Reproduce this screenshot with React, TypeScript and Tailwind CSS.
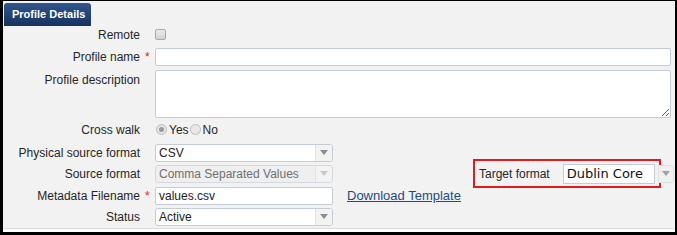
const font = 'font-["Liberation_Sans",Arial,sans-serif]'

function Label({ text, required, top }: { text: string; required?: boolean; top?: boolean }) {
  return (
    <>
      <div className={`w-[137px] shrink-0 text-right text-[12px] leading-[14px] text-[#262626] ${top ? 'pt-[3px]' : ''}`}>
        {text}
      </div>
      <div className={`w-[15px] shrink-0 pl-[5px] text-[12px] leading-[14px] text-[#e02020] ${top ? 'pt-[3px]' : ''}`}>
        {required ? '*' : ''}
      </div>
    </>
  )
}

function Select({ value, disabled }: { value: string; disabled?: boolean }) {
  return (
    <div
      className={`flex h-[18px] w-[178px] items-stretch rounded-[3px] border ${
        disabled ? 'border-[#d3d9e0] bg-[#efefef]' : 'border-[#c3ccd6] bg-white'
      }`}
    >
      <div className={`flex-1 pl-[3px] text-[12px] leading-[16px] ${disabled ? 'text-[#6f6f6f]' : 'text-[#222]'}`}>
        {value}
      </div>
      <div className="flex w-[17px] items-center justify-center rounded-r-[2px] border-l border-[#e2e2e2] bg-[#f3f3f3]">
        <svg width="8" height="5" viewBox="0 0 8 5">
          <path d="M0 0 L8 0 L4 5 Z" fill={disabled ? '#c8c8c8' : '#8c8c8c'} />
        </svg>
      </div>
    </div>
  )
}

export default function App() {
  return (
    <div className={`${font} box-border h-[235px] w-[677px] border-t border-r-2 border-b-[3px] border-l-[3px] border-black bg-white`}>
      <div className="h-[228px] border-b border-[#dcdcdc] bg-[#f2f2f2]">
        <div className="ml-[1px] mt-[1px] inline-flex h-[23px] items-center rounded-t-[3px] bg-[linear-gradient(180deg,#2f568d,#16325f)] pl-2 pr-[6px] text-[11px] font-bold text-white">
          Profile Details
        </div>

        <div className="flex flex-col">
          <div className="flex h-[18px] items-center">
            <Label text="Remote" />
            <div className="h-[11px] w-[11px] rounded-[2px] border border-[#a8a8a8] bg-[linear-gradient(180deg,#ececec,#d2d2d2)]" />
          </div>

          <div className="mt-[4px] flex h-[18px] items-center">
            <Label text="Profile name" required />
            <div className="h-[18px] w-[516px] rounded-[2px] border border-[#c3ccd6] bg-white" />
          </div>

          <div className="mt-[4px] flex items-start">
            <Label text="Profile description" top />
            <textarea
              readOnly
              className="h-[48px] w-[516px] rounded-[2px] border border-[#c3ccd6] bg-white outline-none"
            />
          </div>

          <div className="mt-[3px] flex h-[18px] items-center">
            <Label text="Cross walk" />
            <div className="flex items-center text-[12px] leading-[14px] text-[#262626]">
              <span className="ml-[1px] flex h-[11px] w-[11px] items-center justify-center rounded-full border border-[#bdbdbd] bg-[#e4e4e4]">
                <span className="h-[5px] w-[5px] rounded-full bg-[#9a9a9a]" />
              </span>
              <span className="ml-[2px]">Yes</span>
              <span className="ml-[1px] h-[11px] w-[11px] rounded-full border border-[#bdbdbd] bg-[#e8e8e8]" />
              <span className="ml-[2px]">No</span>
            </div>
          </div>

          <div className="mt-[5px] flex h-[18px] items-center">
            <Label text="Physical source format" />
            <Select value="CSV" />
          </div>

          <div className="mt-[3px] flex h-[18px] items-center">
            <Label text="Source format" />
            <Select value="Comma Separated Values" disabled />
            <div className="ml-auto mr-[1px] flex items-center">
              <div className="-my-[6px] flex h-[29px] w-[188px] items-center border-2 border-solid border-[color:#e01b1b] pl-[4px]">
                <span className="text-[12px] leading-[14px] text-[#262626]">Target format</span>
                <div className="ml-[13px] h-[20px] w-[92px] border border-[#c3ccd6] bg-white pl-[3px] font-['DejaVu_Sans',sans-serif] text-[13px] leading-[18px] text-[#111]">
                  Dublin Core
                </div>
              </div>
              <div className="-ml-[3px] flex h-[18px] w-[16px] items-center justify-center rounded-r-[3px] border border-[#e0e0e0] bg-[#f0f0f0]">
                <svg width="8" height="5" viewBox="0 0 8 5">
                  <path d="M0 0 L8 0 L4 5 Z" fill="#a0a0a0" />
                </svg>
              </div>
            </div>
          </div>

          <div className="mt-[4px] flex h-[18px] items-center">
            <Label text="Metadata Filename" required />
            <div className="h-[18px] w-[178px] rounded-[2px] border border-[#c3ccd6] bg-white pl-[3px] text-[12px] leading-[16px] text-[#222]">
              values.csv
            </div>
            <a className="ml-[14px] text-[13px] leading-[15px] text-[#1c4a8a] underline">Download Template</a>
          </div>

          <div className="mt-[3px] flex h-[18px] items-center">
            <Label text="Status" />
            <Select value="Active" />
          </div>
        </div>
      </div>
    </div>
  )
}
